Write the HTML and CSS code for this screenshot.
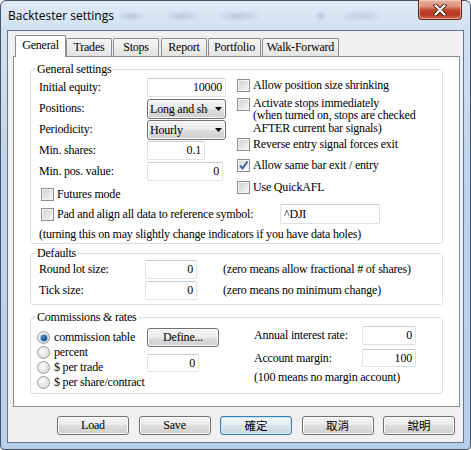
FILE: index.html
```html
<!DOCTYPE html>
<html>
<head>
<meta charset="utf-8">
<title>Backtester settings</title>
<link rel="stylesheet" href="styles.css">
</head>
<body>
<div class="frame">
  <div class="titlebar">
    <span class="title">Backtester settings</span>
    <div class="close">
      <svg class="close-x" width="16" height="12" viewBox="0 0 16 12">
        <path d="M3.5 1.5 L12.5 10.5 M12.5 1.5 L3.5 10.5" stroke="#4a1d15" stroke-width="4.2" stroke-linecap="round"/>
        <path d="M3.5 1.5 L12.5 10.5 M12.5 1.5 L3.5 10.5" stroke="#ffffff" stroke-width="2.3" stroke-linecap="round"/>
      </svg>
    </div>
  </div>
  <div class="client">
    <div class="tabs">
      <div class="tab active w-general">General</div>
      <div class="tab w-trades">Trades</div>
      <div class="tab w-stops">Stops</div>
      <div class="tab w-report">Report</div>
      <div class="tab w-portfolio">Portfolio</div>
      <div class="tab w-wf">Walk-Forward</div>
    </div>
    <div class="panel">
      <fieldset class="group g-general">
        <legend>General settings</legend>
        <div class="gbody">
          <div class="gs-top">
            <div class="gs-left">
              <div class="row"><span class="lbl">Initial equity:</span><span class="inp w-equity">10000</span></div>
              <div class="row"><span class="lbl">Positions:</span><span class="combo"><span class="val">Long and short</span><svg class="arrow" width="7" height="4" viewBox="0 0 7 4"><path d="M0 0 H7 L3.5 4 Z" fill="#000"/></svg></span></div>
              <div class="row"><span class="lbl">Periodicity:</span><span class="combo"><span class="val">Hourly</span><svg class="arrow" width="7" height="4" viewBox="0 0 7 4"><path d="M0 0 H7 L3.5 4 Z" fill="#000"/></svg></span></div>
              <div class="row"><span class="lbl">Min. shares:</span><span class="inp w-minshares">0.1</span></div>
              <div class="row"><span class="lbl">Min. pos. value:</span><span class="inp w-minpos">0</span></div>
            </div>
            <div class="gs-right">
              <div class="chk c1"><span class="cb"></span><span class="ctext">Allow position size shrinking</span></div>
              <div class="chk multi c2"><span class="cb"></span><span class="ctext">Activate stops immediately<br>(when turned on, stops are checked<br>AFTER current bar signals)</span></div>
              <div class="chk c3"><span class="cb"></span><span class="ctext">Reverse entry signal forces exit</span></div>
              <div class="chk c4"><span class="cb on"><svg width="11" height="11" viewBox="0 0 11 11"><path d="M2 5.5 L4.5 8.5 L9.5 1.5" stroke="#3a5795" stroke-width="1.9" fill="none"/></svg></span><span class="ctext">Allow same bar exit / entry</span></div>
              <div class="chk c5"><span class="cb"></span><span class="ctext">Use QuickAFL</span></div>
            </div>
          </div>
          <div class="chk futures"><span class="cb"></span><span class="ctext">Futures mode</span></div>
          <div class="chk pad"><span class="cb"></span><span class="ctext pad-text">Pad and align all data to reference symbol:</span><span class="inp left w-sym">^DJI</span></div>
          <div class="note turning">(turning this on may slightly change indicators if you have data holes)</div>
        </div>
      </fieldset>

      <fieldset class="group g-defaults">
        <legend>Defaults</legend>
        <div class="gbody">
          <div class="row"><span class="lbl lbl-def">Round lot size:</span><span class="inp w-def">0</span><span class="hint">(zero means allow fractional # of shares)</span></div>
          <div class="row"><span class="lbl lbl-def">Tick size:</span><span class="inp w-def">0</span><span class="hint">(zero means no minimum change)</span></div>
        </div>
      </fieldset>

      <fieldset class="group g-comm">
        <legend>Commissions &amp; rates</legend>
        <div class="cbody">
          <div class="radios">
            <div class="radio"><span class="rb on"></span><span>commission table</span></div>
            <div class="radio"><span class="rb"></span><span>percent</span></div>
            <div class="radio"><span class="rb"></span><span>$ per trade</span></div>
            <div class="radio"><span class="rb"></span><span>$ per share/contract</span></div>
          </div>
          <div class="mid">
            <div class="btn btn-define">Define...</div>
            <span class="inp w-comm">0</span>
          </div>
          <div class="rates">
            <div class="rrow r1"><span class="lbl">Annual interest rate:</span><span class="inp w-rate">0</span></div>
            <div class="rrow r2"><span class="lbl">Account margin:</span><span class="inp w-rate h18">100</span></div>
            <div class="note margin-note">(100 means no margin account)</div>
          </div>
        </div>
      </fieldset>
    </div>
    <div class="buttons">
      <div class="btn">Load</div>
      <div class="btn">Save</div>
      <div class="btn default cjk">確定</div>
      <div class="btn cjk">取消</div>
      <div class="btn cjk">說明</div>
    </div>
  </div>
</div>
</body>
</html>
```

FILE: styles.css
```css
* { box-sizing: border-box; }
html, body { margin: 0; padding: 0; }
body {
  width: 471px;
  height: 450px;
  overflow: hidden;
  background: #ffffff;
  font-family: "Liberation Serif", "Times New Roman", serif;
  font-size: 12px;
  letter-spacing: -0.2px;
  color: #000;
}

.frame {
  width: 471px;
  height: 450px;
  border: 1px solid #43546a;
  border-radius: 6px 6px 4px 4px;
  background: linear-gradient(180deg, #dfeaf6 0px, #d2e2f2 28px, #bfd5eb 160px, #b7cfe8 450px);
  display: flex;
  flex-direction: column;
}

.titlebar {
  height: 29px;
  display: flex;
  align-items: flex-start;
  background:
    radial-gradient(ellipse 14px 6px at 130px 15px, rgba(70, 95, 130, 0.22), transparent),
    radial-gradient(ellipse 20px 6px at 182px 15px, rgba(70, 95, 130, 0.20), transparent),
    radial-gradient(ellipse 24px 6px at 238px 15px, rgba(70, 95, 130, 0.20), transparent),
    radial-gradient(ellipse 6px 5px at 320px 15px, rgba(70, 95, 130, 0.22), transparent),
    radial-gradient(ellipse 24px 6px at 360px 15px, rgba(70, 95, 130, 0.18), transparent);
}
.title {
  font-family: "Open Sans", "DejaVu Sans", sans-serif;
  font-size: 12px;
  letter-spacing: 0;
  line-height: 29px;
  padding-left: 7px;
  color: #000;
}
.close {
  margin-left: auto;
  margin-right: 8px;
  margin-top: -1px;
  width: 44px;
  height: 20px;
  border: 1px solid #5d251c;
  border-top: none;
  border-radius: 0 0 4px 4px;
  background: linear-gradient(180deg, #eab3a5 0%, #dc8c76 35%, #c44a32 52%, #b73a22 75%, #d2694e 100%);
  box-shadow: inset 0 0 0 1px rgba(255, 215, 205, 0.55);
  display: flex;
  align-items: center;
  justify-content: center;
}

.client {
  margin: 0 6px;
  height: 413px;
  background: #f0f0f0;
  border: 1px solid #66768a;
  display: flex;
  flex-direction: column;
}

.tabs {
  display: flex;
  align-items: flex-end;
  height: 21px;
  margin: 4px 0 0 7px;
  position: relative;
  z-index: 1;
}
.tab {
  height: 18px;
  border: 1px solid #898c95;
  border-bottom: none;
  border-radius: 2px 2px 0 0;
  background: linear-gradient(180deg, #f5f5f5, #e4e4e4);
  text-align: center;
  line-height: 17px;
  white-space: nowrap;
}
.tab.active {
  height: 22px;
  margin-bottom: -1px;
  background: #ffffff;
  line-height: 19px;
}
.w-general { width: 51px; }
.w-trades { width: 46px; }
.w-stops { width: 46px; margin-left: 1px; }
.w-report { width: 46px; margin-left: 2px; }
.w-portfolio { width: 53px; margin-left: 1px; }
.w-wf { width: 77px; margin-left: 1px; }

.panel {
  margin: 0 3px 0 5px;
  height: 351px;
  background: #ffffff;
  border: 1px solid #898c95;
  padding-left: 16px;
}

.group {
  margin: 6px 0 0 0;
  padding: 0;
  width: 413px;
  border: 1px solid #d5dfe5;
  border-radius: 3px;
  min-width: 0;
}
.group legend {
  padding: 0 1px;
  margin-left: 5px;
  line-height: 13px;
  height: 13px;
}
.g-general { height: 181px; }
.g-defaults { height: 58px; margin-top: 3px; }
.g-comm { height: 83px; margin-top: 6px; }

.gbody { padding: 2px 0 0 8px; }
.g-defaults .gbody { padding-top: 0; }

.gs-top { display: flex; height: 105px; }
.gs-left { width: 198px; }
.gs-right { display: flex; flex-direction: column; }

.row { display: flex; height: 21px; }
.lbl { width: 108px; line-height: 19px; white-space: nowrap; }
.lbl-def { width: 106px; }

.inp {
  display: block;
  height: 19px;
  background: #ffffff;
  border: 1px solid #dde1e6;
  border-top-color: #c8ccd2;
  border-radius: 2px;
  text-align: right;
  padding: 0 3px;
  line-height: 17px;
  white-space: nowrap;
}
.inp.left { text-align: left; }
.h18 { height: 18px; line-height: 16px; }
.w-equity { width: 79px; }
.w-minshares { width: 58px; }
.w-minpos { width: 76px; }
.w-sym { width: 100px; height: 20px; line-height: 18px; }
.w-def { width: 52px; }
.w-comm { width: 52px; height: 18px; line-height: 16px; margin-top: 7px; }
.w-rate { width: 54px; }

.combo {
  display: flex;
  align-items: center;
  width: 79px;
  height: 20px;
  border: 1px solid #707070;
  border-radius: 3px;
  background: linear-gradient(180deg, #f2f2f2 0%, #ebebeb 50%, #dddddd 50%, #cfcfcf 100%);
  box-shadow: inset 0 0 0 1px #fafafa;
  padding-left: 2px;
  overflow: hidden;
}
.combo .val {
  width: 58px;
  overflow: hidden;
  white-space: nowrap;
  line-height: 18px;
}
.combo .arrow { margin-left: 7px; flex: none; }

.chk { display: flex; align-items: center; line-height: 13px; height: 13px; white-space: nowrap; }
.chk.multi { align-items: flex-start; height: 37px; line-height: 12.4px; }
.chk.multi .cb { margin-top: 1px; }
.ctext { margin-left: 3px; }
.c1 { margin-top: 1px; }
.c2 { margin-top: 5px; }
.c3 { margin-top: 3.5px; }
.c4 { margin-top: 8px; }
.c5 { margin-top: 9px; }

.cb {
  width: 13px;
  height: 13px;
  flex: none;
  border: 1px solid #8e8f8f;
  background: linear-gradient(135deg, #cdd0d4 0%, #e4e5e7 55%, #f7f7f7 100%);
  box-shadow: inset 0 0 0 1px #f4f4f4;
  display: flex;
  align-items: center;
  justify-content: center;
}
.cb.on { background: linear-gradient(135deg, #d6d9de 0%, #eceef0 55%, #fafafa 100%); }

.futures { margin-top: 5px; padding-left: 2px; }
.pad { margin-top: 3px; padding-left: 2px; height: 20px; }
.pad-text { width: 223px; }
.note { line-height: 13px; white-space: nowrap; }
.turning { margin-top: 4px; }
.hint { margin-left: 26px; line-height: 19px; white-space: nowrap; }

.cbody { display: flex; padding-left: 6px; }
.radios { width: 110px; margin-top: 6px; }
.radio { display: flex; align-items: center; height: 15px; white-space: nowrap; }
.radio span:last-child { margin-left: 4px; }
.rb {
  width: 13px;
  height: 13px;
  flex: none;
  border-radius: 50%;
  border: 1px solid #9a9c9f;
  background: radial-gradient(circle at 40% 35%, #fbfbfb 0%, #e6e7e9 50%, #c9cbce 100%);
  display: flex;
  align-items: center;
  justify-content: center;
}
.rb.on::after {
  content: "";
  width: 6px;
  height: 6px;
  border-radius: 50%;
  background: radial-gradient(circle at 40% 35%, #4f8fc8 0%, #15508c 55%, #0c3562 100%);
  box-shadow: 0 0 0 1px #9fbfdc;
}
.mid { width: 107px; }
.btn-define { width: 74px; margin-top: 4px; }
.rates { display: flex; flex-direction: column; }
.rrow { display: flex; }
.r1 { margin-top: 2px; height: 19px; }
.r2 { margin-top: 4px; height: 18px; }
.r2 .lbl { line-height: 18px; }
.margin-note { margin-top: 4px; }

.btn {
  width: 72px;
  height: 19px;
  border: 1px solid #707070;
  border-radius: 3px;
  background: linear-gradient(180deg, #f2f2f2 0%, #ebebeb 50%, #dddddd 50%, #cfcfcf 100%);
  box-shadow: inset 0 0 0 1px #fbfbfb;
  display: flex;
  align-items: center;
  justify-content: center;
  line-height: 17px;
  white-space: nowrap;
}
.btn.default {
  border-color: #3c7fb1;
  box-shadow: inset 0 0 0 1px #c4e6f8;
  background: linear-gradient(180deg, #f1f6fa 0%, #e8eef3 50%, #d9e2ea 50%, #cdd7e0 100%);
}
.btn.cjk {
  font-family: "Noto Sans CJK TC", "Noto Sans CJK SC", sans-serif;
  font-size: 11.5px;
  letter-spacing: 0;
}
.buttons {
  display: flex;
  justify-content: flex-end;
  gap: 9.5px;
  margin: 9px 8px 0 0;
}
```
